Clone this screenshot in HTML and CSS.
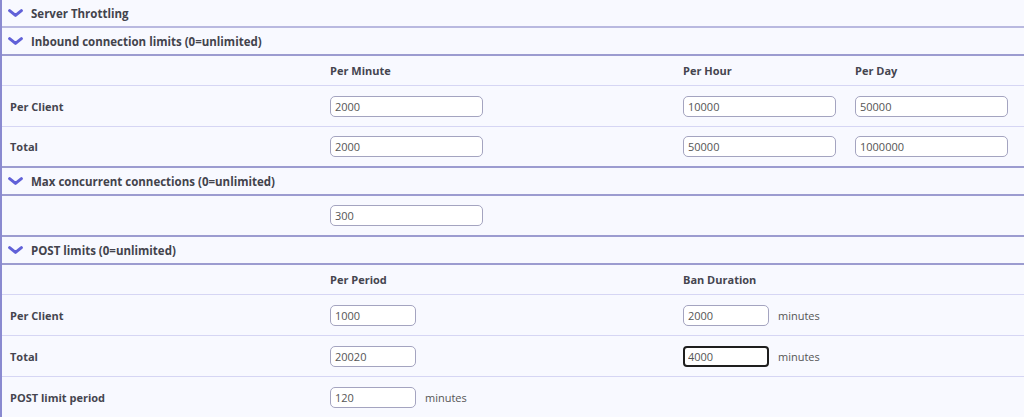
FILE: index.html
```html
<!DOCTYPE html>
<html>
<head>
<meta charset="utf-8">
<link rel="stylesheet" href="styles.css">
</head>
<body>
<div class="panel">
  <div class="head head-top">
    <svg class="chev" viewBox="0 0 15 8"><path d="M1.6 1.6 L7.5 6.4 L13.4 1.6"/></svg>
    <span>Server Throttling</span>
  </div>
  <div class="head">
    <svg class="chev" viewBox="0 0 15 8"><path d="M1.6 1.6 L7.5 6.4 L13.4 1.6"/></svg>
    <span>Inbound connection limits (0=unlimited)</span>
  </div>
  <div class="row th">
    <div class="lab"></div><div>Per Minute</div><div>Per Hour</div><div>Per Day</div>
  </div>
  <div class="row">
    <div class="lab">Per Client</div>
    <div><input class="inp w-l" value="2000"></div>
    <div><input class="inp w-l" value="10000"></div>
    <div><input class="inp w-l" value="50000"></div>
  </div>
  <div class="row last">
    <div class="lab">Total</div>
    <div><input class="inp w-l" value="2000"></div>
    <div><input class="inp w-l" value="50000"></div>
    <div><input class="inp w-l" value="1000000"></div>
  </div>
  <div class="head">
    <svg class="chev" viewBox="0 0 15 8"><path d="M1.6 1.6 L7.5 6.4 L13.4 1.6"/></svg>
    <span>Max concurrent connections (0=unlimited)</span>
  </div>
  <div class="row last">
    <div class="lab"></div>
    <div><input class="inp w-l" value="300"></div>
  </div>
  <div class="head">
    <svg class="chev" viewBox="0 0 15 8"><path d="M1.6 1.6 L7.5 6.4 L13.4 1.6"/></svg>
    <span>POST limits (0=unlimited)</span>
  </div>
  <div class="row th">
    <div class="lab"></div><div>Per Period</div><div class="wide">Ban Duration</div>
  </div>
  <div class="row">
    <div class="lab">Per Client</div>
    <div><input class="inp w-s" value="1000"></div>
    <div class="wide"><input class="inp w-s" value="2000"><span class="unit">minutes</span></div>
  </div>
  <div class="row">
    <div class="lab">Total</div>
    <div><input class="inp w-s" value="20020"></div>
    <div class="wide"><input class="inp w-s focus" value="4000"><span class="unit">minutes</span></div>
  </div>
  <div class="row end">
    <div class="lab">POST limit period</div>
    <div><input class="inp w-s" value="120"><span class="unit">minutes</span></div>
  </div>
</div>
</body>
</html>
```

FILE: styles.css
```css
html, body {
  margin: 0;
  padding: 0;
  background: #f8f9ff;
}
body {
  font-family: "Open Sans", "Liberation Sans", sans-serif;
  font-size: 11px;
  color: #45454f;
}
.panel {
  border-left: 2px solid #8a8ad0;
  height: 417px;
  box-sizing: border-box;
  overflow: hidden;
}
.head {
  height: 28px;
  box-sizing: border-box;
  display: flex;
  align-items: center;
  gap: 8px;
  padding-left: 6px;
  padding-top: 1px;
  border-bottom: 2px solid #9c9cd0;
  font-weight: 700;
  font-size: 11.5px;
  color: #43434c;
}
.head-top {
  border-bottom-color: #b9b9e0;
}
.chev {
  width: 15px;
  height: 8px;
  fill: none;
  stroke: #6161d8;
  stroke-width: 3;
  stroke-linecap: round;
  stroke-linejoin: round;
  margin-top: -1px;
}
.row {
  display: grid;
  grid-template-columns: 328px 353px 172px 1fr;
  align-items: center;
  height: 40px;
  border-bottom: 1px solid #d6d6f4;
}
.row.th {
  height: 29px;
  font-weight: 700;
}
.row.last {
  height: 39px;
  border-bottom: 2px solid #9c9cd0;
}
.row.end {
  border-bottom: none;
}
.wide {
  grid-column: 3 / 5;
}
.lab {
  font-weight: 700;
  padding-left: 8px;
}
.inp {
  box-sizing: border-box;
  height: 21px;
  border: 1px solid #a4a4c0;
  border-radius: 5px;
  background: #fff;
  font-family: "Open Sans", "Liberation Sans", sans-serif;
  font-size: 11px;
  color: #555;
  padding: 0 4px;
  margin: 0;
  vertical-align: middle;
  outline: none;
}
.w-l { width: 153px; }
.w-s { width: 86px; }
.focus {
  border: 2px solid #1e1e1e;
  border-radius: 4px;
  padding: 0 3px;
}
.unit {
  margin-left: 9px;
  color: #555;
  vertical-align: middle;
}
```
